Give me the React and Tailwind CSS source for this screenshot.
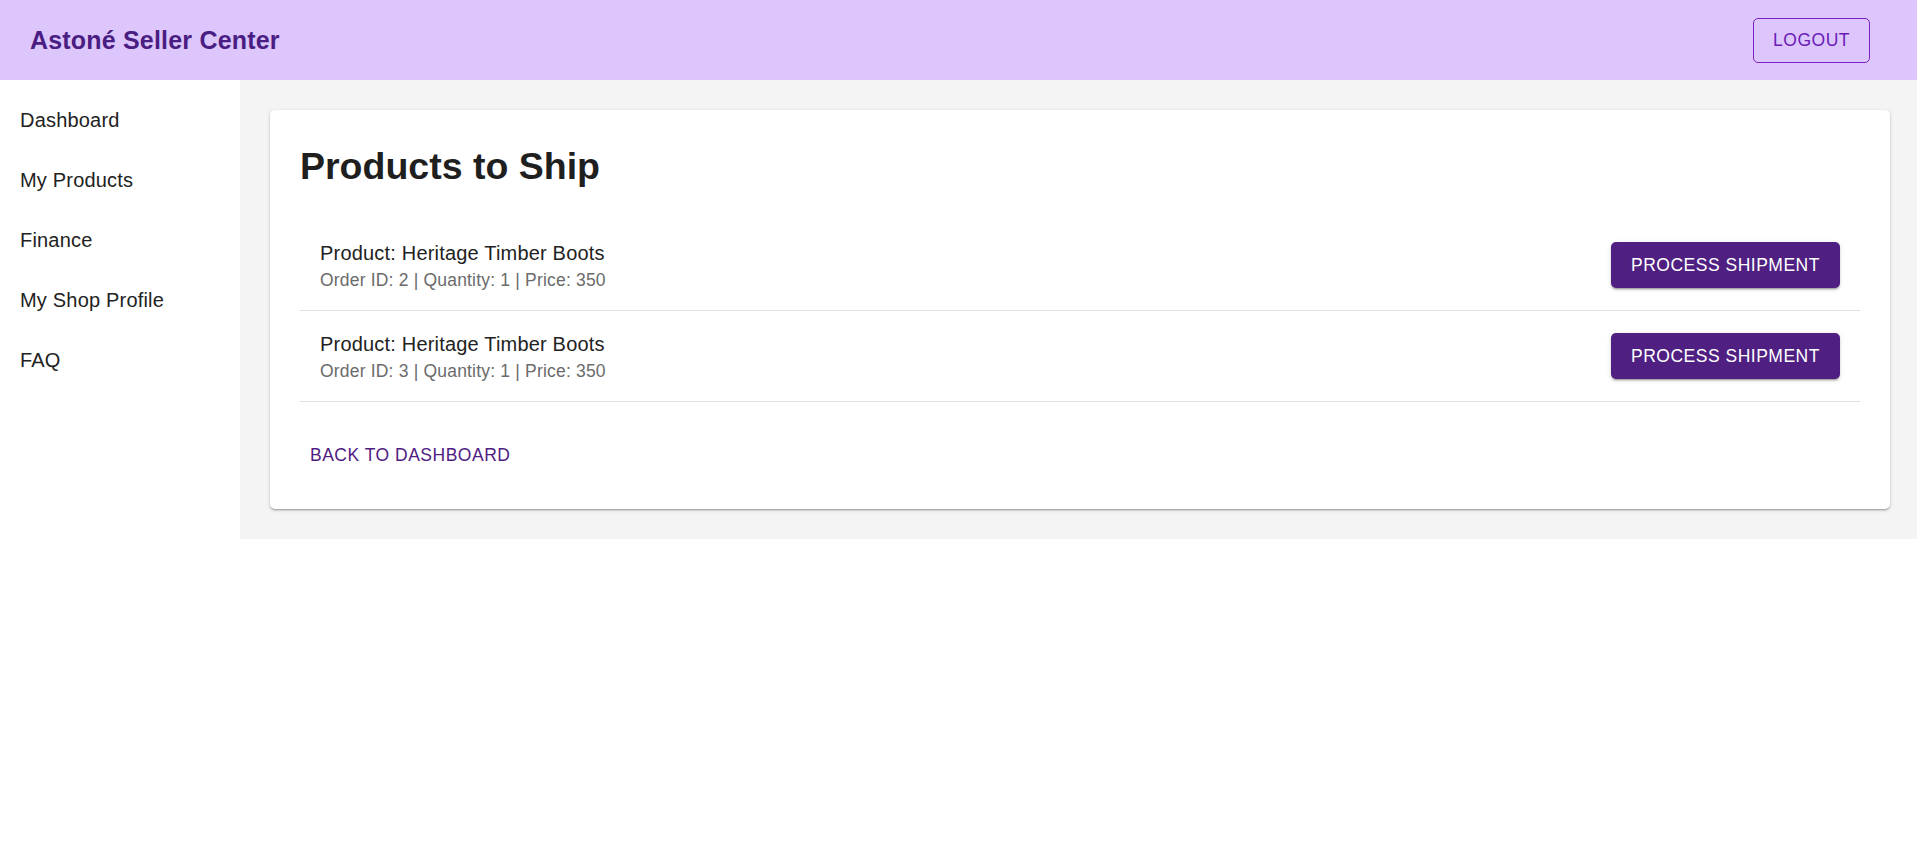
const navItems = ['Dashboard', 'My Products', 'Finance', 'My Shop Profile', 'FAQ']

const orders = [
  { id: 2, product: 'Heritage Timber Boots', quantity: 1, price: 350 },
  { id: 3, product: 'Heritage Timber Boots', quantity: 1, price: 350 },
]

export default function App() {
  return (
    <div className="min-h-screen bg-white" style={{ fontFamily: '"Liberation Sans", Arial, sans-serif' }}>
      {/* Top bar */}
      <header className="h-[80px] bg-[#dcc6fb] flex items-center justify-between pl-[30px] pr-[47px]">
        <h1 className="text-[25px] font-bold text-[#4a1d82] leading-none tracking-[0.19px]">Astoné Seller Center</h1>
        <button className="h-[45px] px-[19px] border border-[#7b22c4] rounded-[5px] text-[17.5px] text-[#6a1bb8] tracking-[0.5px]">
          LOGOUT
        </button>
      </header>

      <div className="flex items-start">
        {/* Sidebar */}
        <nav className="w-[240px] shrink-0 py-[10px]">
          {navItems.map((item) => (
            <div key={item} className="h-[60px] flex items-center px-[20px] text-[20px] text-[#222] tracking-[0.19px]">
              {item}
            </div>
          ))}
        </nav>

        {/* Main */}
        <main className="flex-1 bg-[#f4f4f4] pt-[30px] pb-[30px] pl-[30px] pr-[27px]">
          <div className="bg-white rounded-[5px] shadow-[0_2px_2px_-1px_rgba(0,0,0,0.2),0_1px_2px_0_rgba(0,0,0,0.14),0_1px_4px_0_rgba(0,0,0,0.12)] p-[30px] pb-[31px]">
            <h2 className="text-[37.5px] font-bold text-[#1f1f1f] leading-[52px] mb-[28px]">Products to Ship</h2>

            <div>
              {orders.map((o) => (
                <div key={o.id} className="h-[91px] border-b border-[#e0e0e0] flex items-center justify-between px-[20px]">
                  <div className="flex flex-col">
                    <span className="text-[20px] leading-[30px] text-[#222] tracking-[0.19px]">Product: {o.product}</span>
                    <span className="text-[17.5px] leading-[25px] text-[#6b6b6b] tracking-[0.19px]">
                      Order ID: {o.id} | Quantity: {o.quantity} | Price: {o.price}
                    </span>
                  </div>
                  <button className="h-[46px] w-[229px] rounded-[5px] bg-[#4f2082] text-white text-[17.5px] tracking-[0.5px] shadow-[0_3px_1px_-2px_rgba(0,0,0,0.2),0_2px_2px_0_rgba(0,0,0,0.14),0_1px_5px_0_rgba(0,0,0,0.12)]">
                    PROCESS SHIPMENT
                  </button>
                </div>
              ))}
            </div>

            <button className="mt-[30px] h-[46px] px-[10px] text-[17.5px] text-[#4f2082] tracking-[0.5px] rounded-[5px]">
              BACK TO DASHBOARD
            </button>
          </div>
        </main>
      </div>
    </div>
  )
}
